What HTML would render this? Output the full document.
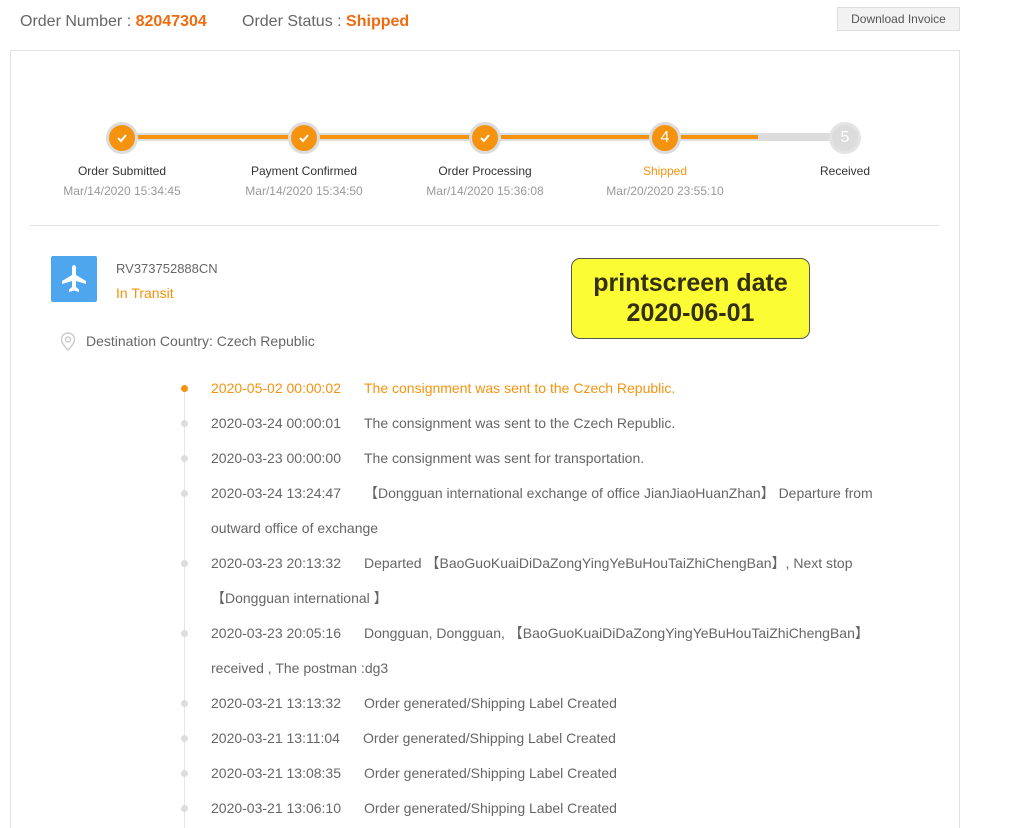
<!DOCTYPE html>
<html style="overflow:hidden;height:828px"><head><meta charset="utf-8"><style>
body{margin:0;width:1012px;height:828px;background:#fff;font-family:"Liberation Sans","Noto Sans CJK SC",sans-serif;overflow:hidden;position:relative;color:#555}
.a{position:absolute;white-space:nowrap}
.box{position:absolute;left:10px;top:50px;width:948px;height:790px;border:1px solid #e2e2e2}
.circ{position:absolute;width:26px;height:26px;border-radius:50%;background:#f5930f;border:3px solid #dcdcdc;top:122px;color:#fff;text-align:center;line-height:26px;font-size:16px}
.circ svg{position:absolute;left:7px;top:8px}
.lbl{position:absolute;width:180px;text-align:center;font-size:12px;color:#333}
.dt{position:absolute;width:180px;text-align:center;font-size:12px;color:#999}
.row{position:absolute;left:211px;font-size:14px;color:#666;line-height:35px}
.dot{position:absolute;left:181px;width:7px;height:7px;border-radius:50%;background:#ddd}
</style></head><body>
<div class="a" style="left:20px;top:13px;font-size:16px;color:#666">Order Number : <b style="color:#f06a10">82047304</b></div>
<div class="a" style="left:242px;top:13px;font-size:16px;color:#666">Order Status : <b style="color:#f06a10">Shipped</b></div>
<div class="a" style="left:837px;top:7px;width:121px;height:22px;background:#f2f2f2;border:1px solid #ddd;font-size:12px;color:#555;text-align:center;line-height:22px">Download Invoice</div>
<div class="box"></div>
<div class="a" style="left:122px;top:133px;width:723px;height:8px;background:#dcdcdc"></div>
<div class="a" style="left:122px;top:135px;width:636px;height:4px;background:#f5930f"></div>
<div class="circ" style="left:106px"><svg width="12" height="10" viewBox="0 0 12 10"><path d="M2 5l3 3 5-6" fill="none" stroke="#fff" stroke-width="2"/></svg></div>
<div class="circ" style="left:288px"><svg width="12" height="10" viewBox="0 0 12 10"><path d="M2 5l3 3 5-6" fill="none" stroke="#fff" stroke-width="2"/></svg></div>
<div class="circ" style="left:469px"><svg width="12" height="10" viewBox="0 0 12 10"><path d="M2 5l3 3 5-6" fill="none" stroke="#fff" stroke-width="2"/></svg></div>
<div class="circ" style="left:649px">4</div>
<div class="circ" style="left:829px;background:#dcdcdc;border-color:#e4e4e4">5</div>
<div class="lbl" style="left:32px;top:164px">Order Submitted</div>
<div class="lbl" style="left:214px;top:164px">Payment Confirmed</div>
<div class="lbl" style="left:395px;top:164px">Order Processing</div>
<div class="lbl" style="left:575px;top:164px;color:#f5930f">Shipped</div>
<div class="lbl" style="left:755px;top:164px">Received</div>
<div class="dt" style="left:32px;top:184px">Mar/14/2020 15:34:45</div>
<div class="dt" style="left:214px;top:184px">Mar/14/2020 15:34:50</div>
<div class="dt" style="left:395px;top:184px">Mar/14/2020 15:36:08</div>
<div class="dt" style="left:575px;top:184px">Mar/20/2020 23:55:10</div>
<div class="a" style="left:30px;top:225px;width:909px;height:1px;background:#e2e2e2"></div>
<div class="a" style="left:51px;top:256px;width:46px;height:46px;background:#4ea6ef;border-radius:2px">
<svg width="46" height="46" viewBox="0 0 46 46"><path d="M23 9c1.5 0 2 2 2 3v7l10 6v3l-10-3v6l3 2.5v2.5l-5-1.5-5 1.5v-2.5l3-2.5v-6l-10 3v-3l10-6v-7c0-1 .5-3 2-3z" fill="#fff"/></svg></div>
<div class="a" style="left:116px;top:261px;font-size:13px;color:#666">RV373752888CN</div>
<div class="a" style="left:116px;top:285px;font-size:14px;color:#f5930f">In Transit</div>
<svg class="a" style="left:60px;top:332px" width="16" height="19" viewBox="0 0 16 19"><path d="M8 1a6.5 6.5 0 0 0-6.5 6.5C1.5 12 8 18 8 18s6.5-6 6.5-10.5A6.5 6.5 0 0 0 8 1z" fill="none" stroke="#ccc" stroke-width="1.5"/><circle cx="8" cy="7.5" r="2.5" fill="none" stroke="#ccc" stroke-width="1.5"/></svg>
<div class="a" style="left:86px;top:333px;font-size:14px;color:#666">Destination Country: Czech Republic</div>
<div class="a" style="left:571px;top:258px;width:239px;height:81px;background:#fcfc34;border:1px solid #555;border-radius:9px;text-align:center;font-weight:bold;font-size:25px;line-height:30px;color:#332f10;padding-top:9px;box-sizing:border-box">printscreen date<br>2020-06-01</div>
<div class="a" style="left:184px;top:388px;width:1px;height:440px;background:#e6e6e6"></div>
<div class="dot" style="top:385px;background:#f5930f"></div>
<div class="dot" style="top:420px"></div><div class="dot" style="top:455px"></div><div class="dot" style="top:490px"></div><div class="dot" style="top:560px"></div><div class="dot" style="top:630px"></div><div class="dot" style="top:700px"></div><div class="dot" style="top:735px"></div><div class="dot" style="top:770px"></div><div class="dot" style="top:805px"></div>
<div class="row" style="top:371px;color:#f5930f">2020-05-02 00:00:02<span class="a" style="left:153px">The consignment was sent to the Czech Republic.</span></div>
<div class="row" style="top:406px">2020-03-24 00:00:01<span class="a" style="left:153px">The consignment was sent to the Czech Republic.</span></div>
<div class="row" style="top:441px">2020-03-23 00:00:00<span class="a" style="left:153px">The consignment was sent for transportation.</span></div>
<div class="row" style="top:476px">2020-03-24 13:24:47<span class="a" style="left:153px">【Dongguan international exchange of office JianJiaoHuanZhan】 Departure from</span></div>
<div class="row" style="top:511px">outward office of exchange</div>
<div class="row" style="top:546px">2020-03-23 20:13:32<span class="a" style="left:153px">Departed 【BaoGuoKuaiDiDaZongYingYeBuHouTaiZhiChengBan】, Next stop</span></div>
<div class="row" style="top:581px">【Dongguan international 】</div>
<div class="row" style="top:616px">2020-03-23 20:05:16<span class="a" style="left:153px">Dongguan, Dongguan, 【BaoGuoKuaiDiDaZongYingYeBuHouTaiZhiChengBan】</span></div>
<div class="row" style="top:651px">received , The postman :dg3</div>
<div class="row" style="top:686px">2020-03-21 13:13:32<span class="a" style="left:153px">Order generated/Shipping Label Created</span></div>
<div class="row" style="top:721px">2020-03-21 13:11:04<span class="a" style="left:152px">Order generated/Shipping Label Created</span></div>
<div class="row" style="top:756px">2020-03-21 13:08:35<span class="a" style="left:153px">Order generated/Shipping Label Created</span></div>
<div class="row" style="top:791px">2020-03-21 13:06:10<span class="a" style="left:153px">Order generated/Shipping Label Created</span></div>
</body></html>
